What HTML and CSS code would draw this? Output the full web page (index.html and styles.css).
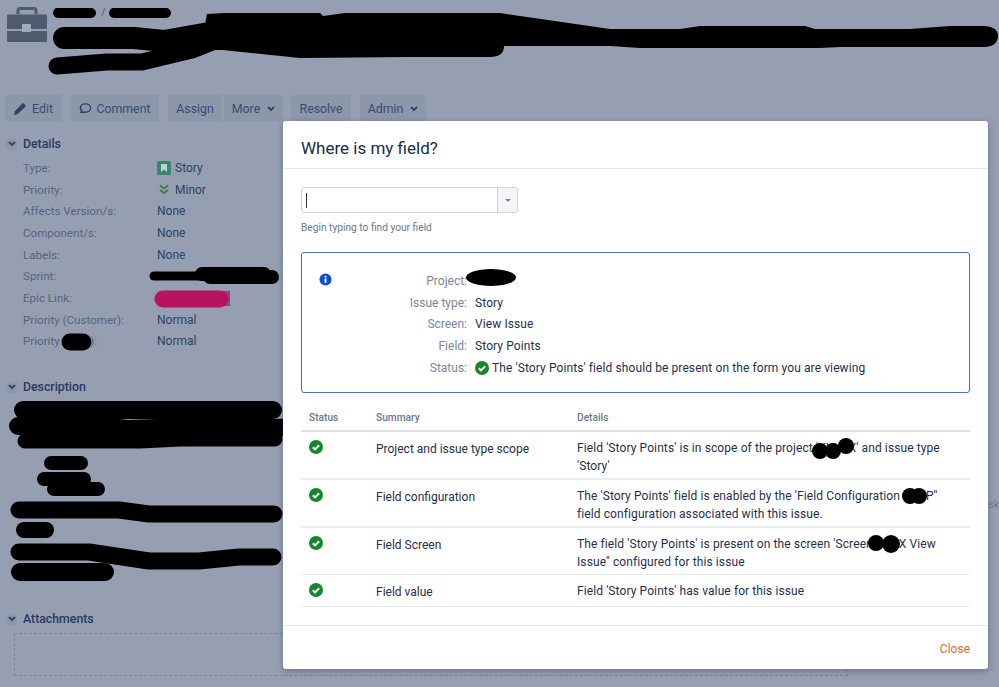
FILE: index.html
```html
<!DOCTYPE html>
<html lang="en">
<head>
<meta charset="utf-8">
<title>Where is my field?</title>
<link rel="stylesheet" href="styles.css">
</head>
<body>
<div class="page">
  <header class="issue-head">
    <svg class="project-icon" viewBox="0 0 40 36" width="40" height="36"><rect y="7.500" width="40" height="27.500" rx="1" fill="#505a6e"/><rect y="22" width="40" height="2" fill="#959fb1"/><rect x="15" y="17" width="9" height="8" fill="#a3abba"/><path fill="none" stroke="#505a6e" stroke-width="3" d="M11 7V3.500A2 2 0 0 1 13 1.500h14a2 2 0 0 1 2 2V7"/></svg>
    <div class="crumbs"><span class="crumb crumb-project">Project</span><span class="sep">/</span><span class="crumb crumb-key">Issue key</span></div>
  </header>
  <nav class="toolbar">
    <button class="btn btn-edit"><svg class="btn-icon" viewBox="0 0 14 14"><path fill="#2f4266" d="M0 14l1-4 8-8.500a1 1 0 0 1 1.400 0l2 2a1 1 0 0 1 0 1.400L4 13z"/></svg>Edit</button>
    <button class="btn btn-comment"><svg class="btn-icon" viewBox="0 0 14 14"><path fill="none" stroke="#2f4266" stroke-width="1.500" d="M7 2c3.300 0 5.500 2 5.500 4.500S10.300 11 7 11H2l1-1.500C2 8.500 1.500 7.500 1.500 6.500 1.500 4 3.700 2 7 2z"/></svg>Comment</button>
    <div class="btn-group">
      <button class="btn btn-assign">Assign</button>
      <button class="btn btn-more">More<svg class="caret" viewBox="0 0 8 6"><path fill="none" stroke="#2f4266" stroke-width="1.800" d="M1 1l3 3 3-3"/></svg></button>
    </div>
    <button class="btn btn-resolve">Resolve</button>
    <button class="btn btn-admin">Admin<svg class="caret" viewBox="0 0 8 6"><path fill="none" stroke="#2f4266" stroke-width="1.800" d="M1 1l3 3 3-3"/></svg></button>
  </nav>
  <main class="issue-body">
    <section class="module">
      <h2 class="module-title"><span class="toggle"><svg viewBox="0 0 8 6"><path fill="none" stroke="#2f4266" stroke-width="1.800" d="M1 1l3 3 3-3"/></svg></span>Details</h2>
      <dl class="fields">
        <dt>Type:</dt><dd><svg class="mini" viewBox="0 0 14 14"><rect width="14" height="14" rx="1.500" fill="#36876f"/><path fill="#c4cbd6" d="M4 3h6v8L7 8.800 4 11z"/></svg>Story</dd>
        <dt>Priority:</dt><dd><svg class="mini" viewBox="0 0 14 14"><path fill="none" stroke="#2f7a45" stroke-width="1.700" d="M3 2.500l4 3 4-3M3 7l4 3 4-3"/></svg>Minor</dd>
        <dt>Affects Version/s:</dt><dd>None</dd>
        <dt>Component/s:</dt><dd>None</dd>
        <dt>Labels:</dt><dd>None</dd>
        <dt>Sprint:</dt><dd>&nbsp;</dd>
        <dt>Epic Link:</dt><dd>&nbsp;</dd>
        <dt>Priority (Customer):</dt><dd>Normal</dd>
        <dt>Priority (Cust):</dt><dd>Normal</dd>
      </dl>
    </section>
    <section class="module module-desc">
      <h2 class="module-title"><span class="toggle"><svg viewBox="0 0 8 6"><path fill="none" stroke="#2f4266" stroke-width="1.800" d="M1 1l3 3 3-3"/></svg></span>Description</h2>
    </section>
    <section class="module module-attach">
      <h2 class="module-title"><span class="toggle"><svg viewBox="0 0 8 6"><path fill="none" stroke="#2f4266" stroke-width="1.800" d="M1 1l3 3 3-3"/></svg></span>Attachments</h2>
      <div class="dropzone"></div>
    </section>
  </main>

  <svg class="redactions" viewBox="0 0 999 687" width="999" height="687">
    <path fill="#000" d="M207 14L225 13H320L323 16L345 13H500L610 29H680L700 26H805L815 29H910L950 26H985Q998 27 998 36Q998 46 985 47H840L820 48H640L610 46H504Q504 57 490 57H410L300 58L223 50L200 50Z"/>
    <g fill="none" stroke="#000" stroke-linecap="round" stroke-linejoin="round">
      <path stroke-width="10" d="M58 13h33M114 13h52"/>
      <path stroke-width="22" d="M64 38h70l30 3 45-8"/>
      <path stroke-width="17" d="M57 66l50-4h35l50-12 20-8"/>
      <path stroke-width="9" d="M154 276h50"/>
      <path stroke-width="14" d="M202 274h62M210 277h62"/>
      <path stroke-width="17" d="M70 342h13"/>
      <path stroke-width="18" d="M23 410h250"/>
      <path stroke-width="18" d="M18 426h80l30 3 60-2 80 1 45-1"/>
      <path stroke-width="15" d="M25 441h115l40-2h95"/>
      <path stroke-width="14" d="M51 463h30"/>
      <path stroke-width="14" d="M44 479h40M54 489h44"/>
      <path stroke-width="17" d="M19 510h100l30 4h125"/>
      <path stroke-width="16" d="M24 530h22"/>
      <path stroke-width="17" d="M19 552h70l60 9h50l40-4h34"/>
      <path stroke-width="18" d="M20 572h85"/>
    </g>
    <path fill="#874a7f" d="M200 291h30v15h-30z"/>
    <path stroke="#b9135f" stroke-width="17" stroke-linecap="round" d="M163 299h57"/>
  </svg>

  <span class="peek">sk</span>

  <div class="modal" role="dialog">
    <h1 class="modal-title">Where is my field?</h1>
    <div class="modal-content">
      <div class="picker"><span class="cursor"></span><span class="picker-arrow"></span></div>
      <p class="hint">Begin typing to find your field</p>
      <div class="info">
        <svg class="info-icon" viewBox="0 0 14 14"><circle cx="7" cy="7" r="6.500" fill="#0b50c8"/><rect x="6" y="6" width="2" height="4.500" fill="#fff"/><circle cx="7" cy="4" r="1.100" fill="#fff"/></svg>
        <dl class="info-list">
          <dt>Project:</dt><dd>&nbsp;</dd>
          <dt>Issue type:</dt><dd>Story</dd>
          <dt>Screen:</dt><dd>View Issue</dd>
          <dt>Field:</dt><dd>Story Points</dd>
          <dt>Status:</dt><dd><svg class="ok ok-inline" viewBox="0 0 14 14"><circle cx="7" cy="7" r="7" fill="#14892c"/><path fill="none" stroke="#fff" stroke-width="2" d="M3.800 7.200l2.200 2.200 4.200-4.200"/></svg>The 'Story Points' field should be present on the form you are viewing</dd>
        </dl>
      </div>
      <table class="results">
        <thead><tr><th class="c1">Status</th><th class="c2">Summary</th><th>Details</th></tr></thead>
        <tbody>
          <tr><td><svg class="ok" viewBox="0 0 14 14"><circle cx="7" cy="7" r="7" fill="#14892c"/><path fill="none" stroke="#fff" stroke-width="2" d="M3.800 7.200l2.200 2.200 4.200-4.200"/></svg></td><td>Project and issue type scope</td><td>Field 'Story Points' is in scope of the project 'XXXXX' and issue type<br>'Story'</td></tr>
          <tr><td><svg class="ok" viewBox="0 0 14 14"><circle cx="7" cy="7" r="7" fill="#14892c"/><path fill="none" stroke="#fff" stroke-width="2" d="M3.800 7.200l2.200 2.200 4.200-4.200"/></svg></td><td>Field configuration</td><td>The 'Story Points' field is enabled by the 'Field Configuration XXXP''<br>field configuration associated with this issue.</td></tr>
          <tr><td><svg class="ok" viewBox="0 0 14 14"><circle cx="7" cy="7" r="7" fill="#14892c"/><path fill="none" stroke="#fff" stroke-width="2" d="M3.800 7.200l2.200 2.200 4.200-4.200"/></svg></td><td>Field Screen</td><td>The field 'Story Points' is present on the screen 'Screen XXXX View<br>Issue'' configured for this issue</td></tr>
          <tr><td><svg class="ok" viewBox="0 0 14 14"><circle cx="7" cy="7" r="7" fill="#14892c"/><path fill="none" stroke="#fff" stroke-width="2" d="M3.800 7.200l2.200 2.200 4.200-4.200"/></svg></td><td>Field value</td><td>Field 'Story Points' has value for this issue</td></tr>
        </tbody>
      </table>
    </div>
    <footer class="modal-foot"><a class="close">Close</a></footer>
    <svg class="redactions" viewBox="283 121 705 548" width="705" height="548">
      <g fill="#000">
        <ellipse cx="491" cy="277.500" rx="25" ry="8.500"/>
        <circle cx="820" cy="451" r="8"/><circle cx="833" cy="451" r="8"/><circle cx="846" cy="446" r="8"/>
        <circle cx="910" cy="496" r="8"/><circle cx="919" cy="496" r="8"/>
        <circle cx="876" cy="543" r="8"/><circle cx="891" cy="544" r="9"/>
      </g>
    </svg>
  </div>
</div>
</body>
</html>
```
FILE: styles.css
```css
* { box-sizing: border-box; }
html, body { margin: 0; padding: 0; }
body {
  font-family: Roboto, "Noto Sans", sans-serif;
  font-size: 12px;
  color: #2f4266;
  background: #959fb1;
}
.page {
  position: relative;
  width: 999px;
  height: 687px;
  overflow: hidden;
  background: #959fb1;
}
.issue-head {
  display: flex;
  gap: 7px;
  height: 95px;
  padding: 7px 0 0 7px;
}
.project-icon { flex: none; }
.crumbs { display: flex; gap: 5px; line-height: 12px; font-size: 11px; color: #505a6e; }
.crumb { white-space: nowrap; color: #2f4266; }
.crumb-project { width: 42px; }
.crumb-key { width: 62px; }
.toolbar { display: flex; gap: 8px; padding-left: 5px; height: 26px; }
.btn {
  display: inline-flex;
  align-items: center;
  justify-content: center;
  height: 26px;
  padding: 1px 0 0;
  border: 0;
  border-radius: 3px;
  background: #8c97aa;
  font: inherit;
  font-size: 12.300px;
  color: #3a4b70;
  white-space: nowrap;
}
.btn-edit { width: 57px; }
.btn-comment { width: 89px; margin-left: 0; }
.btn-assign { width: 54px; }
.btn-more { width: 59px; }
.btn-resolve { width: 60px; }
.btn-admin { width: 66px; margin-left: 1px; }
.btn-icon { width: 13px; height: 13px; margin-right: 5px; }
.btn-group { display: flex; gap: 2px; margin-left: 1px; }
.caret { width: 8px; height: 6px; margin-left: 7px; }
.issue-body { padding: 14px 0 0 6px; }
.module-title {
  display: flex;
  align-items: center;
  gap: 6px;
  margin: 0;
  height: 18px;
  font-size: 12.300px;
  font-weight: 500;
  color: #283a60;
}
.toggle {
  display: flex;
  align-items: center;
  justify-content: center;
  width: 11px;
  height: 11px;
  border-radius: 3px;
  background: #8c97aa;
}
.toggle svg { width: 8px; height: 6px; }
.fields {
  display: grid;
  grid-template-columns: 134px 1fr;
  grid-auto-rows: 21.7px;
  margin: 4px 0 0 17px;
  align-items: center;
  width: 260px;
}
.fields dt { font-size: 11.600px; color: #566480; }
.fields dd { margin: 0; display: flex; align-items: center; gap: 3px; color: #2f4266; }
.mini { width: 14px; height: 14px; margin-right: 1px; }
.module-desc { margin-top: 26px; height: 232px; }
.dropzone {
  width: 834px;
  height: 43px;
  margin: 5px 0 0 8px;
  border: 1px dashed #7c879b;
}
.redactions { position: absolute; left: 0; top: 0; pointer-events: none; }
.peek { position: absolute; left: 988px; top: 498px; font-size: 11px; color: #6f7b92; }

.modal {
  position: absolute;
  left: 283px;
  top: 121px;
  width: 705px;
  height: 548px;
  background: #fff;
  border-radius: 3px;
  box-shadow: 0 2px 6px rgba(40,50,70,.4);
  color: #1f2f50;
  display: flex;
  flex-direction: column;
}
.modal-title {
  margin: 0;
  height: 48px;
  padding: 0 18px;
  border-bottom: 1px solid #e8e9ed;
  font-size: 17px;
  font-weight: 400;
  line-height: 55px;
  color: #172b4d;
}
.modal-content { flex: 1; padding: 18px 18px 0; }
.picker {
  display: flex;
  align-items: center;
  justify-content: space-between;
  width: 217px;
  height: 26px;
  border: 1px solid #cfd3da;
  border-radius: 3px;
  padding-left: 4px;
}
.cursor { width: 1px; height: 15px; background: #333; }
.picker-arrow {
  position: relative;
  width: 20px;
  height: 24px;
  background: #f4f5f7;
  border-left: 1px solid #cfd3da;
  border-radius: 0 3px 3px 0;
}
.picker-arrow::after {
  content: "";
  position: absolute;
  left: 7px;
  top: 11px;
  border: 3px solid transparent;
  border-top: 3px solid #7a8496;
}
.hint { margin: 8px 0 0; font-size: 10.200px; line-height: 14px; color: #6b778c; }
.info {
  display: flex;
  height: 141px;
  margin-top: 17px;
  padding: 17px 17px 0;
  border: 1px solid #3b73d6;
  border-radius: 3px;
}
.info-icon { width: 13px; height: 13px; flex: none; margin-top: 3px; }
.info-list {
  display: grid;
  grid-template-columns: 135px 1fr;
  grid-auto-rows: 21.7px;
  column-gap: 8px;
  margin: 0;
  align-items: center;
}
.info-list dt { text-align: right; color: #7a869a; }
.info-list dd { margin: 0; display: flex; align-items: center; color: #1f2f50; letter-spacing: .1px; }
.ok { width: 14px; height: 14px; display: block; }
.ok-inline { margin-right: 3px; }
.results { width: 100%; margin-top: 13px; border-collapse: collapse; table-layout: fixed; }
.results th {
  height: 25px;
  padding: 0 8px 2px;
  border-bottom: 2px solid #dfe1e6;
  text-align: left;
  font-size: 10.200px;
  font-weight: 500;
  color: #6b778c;
}
.results .c1 { width: 67px; }
.results .c2 { width: 201px; }
.results td {
  padding: 8px 8px 3px;
  border-bottom: 2px solid #ebecf0;
  vertical-align: top;
  line-height: 17.500px;
}
.results tr:nth-child(n+3) td { border-bottom-width: 1px; }
.results tr:last-child td { padding-bottom: 4.500px; }
.results td:nth-child(3) { letter-spacing: .1px; }
.results td:nth-child(2) { padding-top: 9px; }
.modal-foot {
  height: 44px;
  border-top: 1px solid #e8e9ed;
  padding: 16px 18px 0;
  text-align: right;
}
.close { color: #f2622d; }
```
